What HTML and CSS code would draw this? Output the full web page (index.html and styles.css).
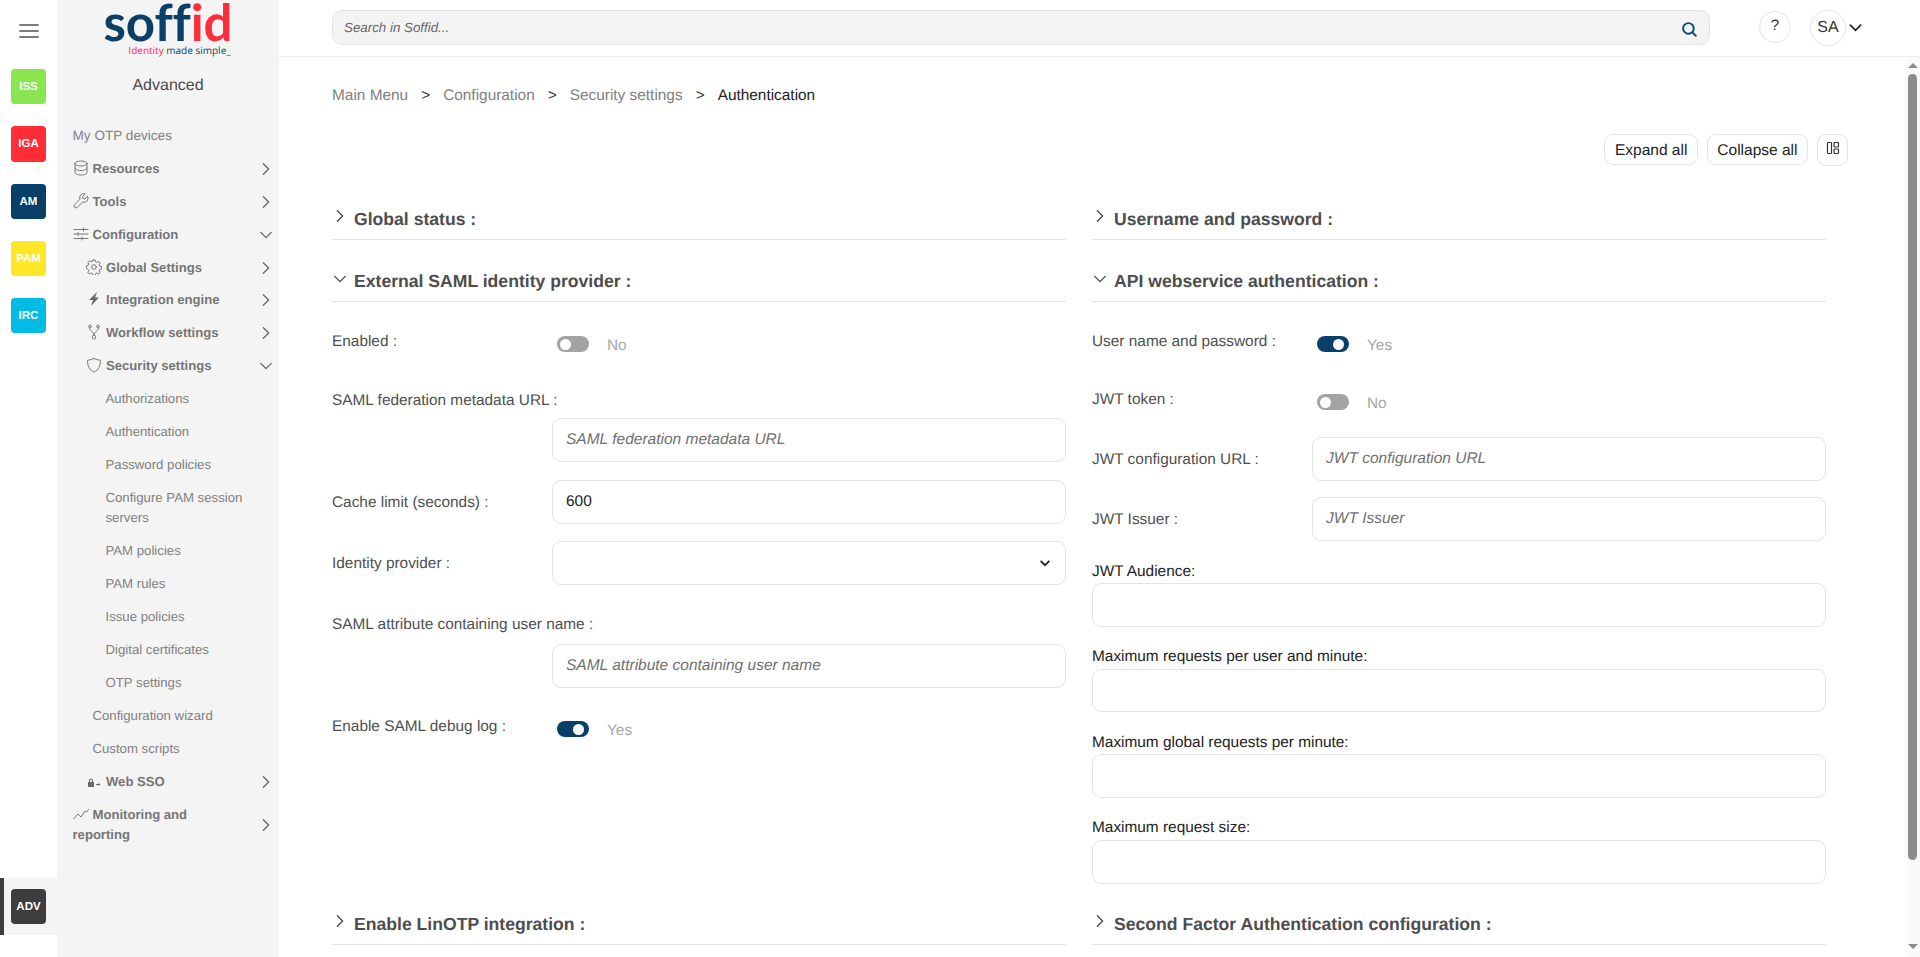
FILE: index.html
```html
<!DOCTYPE html>
<html lang="en">
<head>
<meta charset="utf-8">
<title>Soffid - Authentication</title>
<link rel="stylesheet" href="styles.css">
</head>
<body>
<svg class="defs" width="0" height="0" aria-hidden="true">
  <symbol id="chev-r" viewBox="0 0 16 16"><path d="M5 2l6 6-6 6" fill="none" stroke="currentColor" stroke-width="1.500" stroke-linecap="round" stroke-linejoin="round"/></symbol>
  <symbol id="chev-d" viewBox="0 0 16 16"><path d="M2 5l6 6 6-6" fill="none" stroke="currentColor" stroke-width="1.500" stroke-linecap="round" stroke-linejoin="round"/></symbol>
</svg>

<nav class="apps">
  <button class="burger" aria-label="Menu"><span></span><span></span><span></span></button>
  <a class="app app-iss">ISS</a>
  <a class="app app-iga">IGA</a>
  <a class="app app-am">AM</a>
  <a class="app app-pam">PAM</a>
  <a class="app app-irc">IRC</a>
  <div class="app-current"><a class="app app-adv">ADV</a></div>
</nav>

<aside class="panel">
  <div class="logo">
    <div class="logo-word"><span class="navy">soff</span><span class="red">id</span></div>
    <div class="logo-tag"><span class="red">Identity</span> <span class="navy">made simple_</span></div>
  </div>
  <div class="panel-title">Advanced</div>
  <ul class="menu">
    <li class="item plain l0 first">My OTP devices</li>
    <li class="item bold l0"><span class="txt"><svg class="ic" viewBox="0 0 16 16"><ellipse cx="8" cy="3.500" rx="6" ry="2.500"/><path d="M2 3.500v9c0 1.400 2.700 2.500 6 2.500s6-1.100 6-2.500v-9M2 8c0 1.400 2.700 2.500 6 2.500s6-1.100 6-2.500"/></svg>Resources</span><svg class="chev"><use href="#chev-r"/></svg></li>
    <li class="item bold l0"><span class="txt"><svg class="ic" viewBox="0 0 16 16"><path d="M14.600 3.300l-2.700 2.700-1.900-.5-.5-1.900 2.700-2.700A4 4 0 0 0 7 6.200L1.600 11.600a1.900 1.900 0 0 0 2.700 2.700L9.700 9a4 4 0 0 0 4.900-5.700z"/></svg>Tools</span><svg class="chev"><use href="#chev-r"/></svg></li>
    <li class="item bold l0"><span class="txt"><svg class="ic" viewBox="0 0 16 16"><path d="M1 3.500h14M1 8h14M1 12.500h14M10.500 2v3M5 6.500v3M9 11v3"/></svg>Configuration</span><svg class="chev"><use href="#chev-d"/></svg></li>
    <li class="item bold l1 tight"><span class="txt"><svg class="ic" viewBox="0 0 16 16"><circle cx="8" cy="8" r="2.300"/><path d="M6.800 1h2.400l.4 1.900 1.300.6 1.700-1 1.600 1.700-1 1.600.6 1.400 1.900.4v2.400l-1.900.4-.6 1.300 1 1.700-1.700 1.600-1.600-1-1.400.6-.4 1.900H6.800l-.4-1.900-1.300-.6-1.700 1-1.600-1.700 1-1.600-.6-1.400L.3 9.200V6.800l1.900-.4.6-1.300-1-1.700 1.700-1.600 1.600 1 1.400-.6z"/></svg>Global Settings</span><svg class="chev"><use href="#chev-r"/></svg></li>
    <li class="item bold l1"><span class="txt"><svg class="ic ic-fill" viewBox="0 0 16 16"><path d="M11 1L3 9h4l-2 6 8-8.500H9z"/></svg>Integration engine</span><svg class="chev"><use href="#chev-r"/></svg></li>
    <li class="item bold l1"><span class="txt"><svg class="ic" viewBox="0 0 16 16"><circle cx="4" cy="2.500" r="1.400"/><circle cx="12" cy="2.500" r="1.400"/><rect x="6.500" y="11.500" width="3" height="3.500" rx=".8"/><path d="M3.500 4c0 3.500 4.500 3 4.500 7.500M12.500 4c0 3.500-4.500 3-4.500 7.500"/></svg>Workflow settings</span><svg class="chev"><use href="#chev-r"/></svg></li>
    <li class="item bold l1"><span class="txt"><svg class="ic" viewBox="0 0 16 16"><path d="M8 1.500c2 1 4.500 1.500 6.500 1.700 0 5.800-2 9.800-6.500 11.800C3.500 13 1.500 9 1.500 3.200 3.500 3 6 2.500 8 1.500z"/></svg>Security settings</span><svg class="chev"><use href="#chev-d"/></svg></li>
    <li class="item plain l2">Authorizations</li>
    <li class="item plain l2">Authentication</li>
    <li class="item plain l2">Password policies</li>
    <li class="item plain l2">Configure PAM session servers</li>
    <li class="item plain l2">PAM policies</li>
    <li class="item plain l2">PAM rules</li>
    <li class="item plain l2">Issue policies</li>
    <li class="item plain l2">Digital certificates</li>
    <li class="item plain l2">OTP settings</li>
    <li class="item plain l1b">Configuration wizard</li>
    <li class="item plain l1b">Custom scripts</li>
    <li class="item bold l1"><span class="txt"><svg class="ic ic-fill" viewBox="0 0 16 16"><path d="M3 9V7.500a2 2 0 0 1 4 0V9h1v5H2V9zm1 0h2V7.500a1 1 0 0 0-2 0zM10 11h2.500v-1l2 1.500-2 1.500v-1H10z"/></svg>Web SSO</span><svg class="chev"><use href="#chev-r"/></svg></li>
    <li class="item bold l0 wrap"><span class="txt"><svg class="ic" viewBox="0 0 16 16"><path d="M.5 13l4.500-5 3 3 4-6 1.500 1 2-2.500"/></svg>Monitoring and reporting</span><svg class="chev"><use href="#chev-r"/></svg></li>
  </ul>
</aside>

<div class="page">
  <header class="topbar">
    <div class="search">
      <input class="search-input" type="text" placeholder="Search in Soffid...">
      <svg class="search-ic" viewBox="0 0 16 16"><circle cx="7" cy="7" r="5"/><path d="M10.800 10.800L14.500 14.500"/></svg>
    </div>
    <button class="help">?</button>
    <button class="avatar">SA</button>
    <svg class="avatar-chev" viewBox="0 0 16 16"><path d="M2 5l6 6 6-6"/></svg>
  </header>

  <div class="body-row">
    <main class="content">
      <ol class="crumbs">
        <li>Main Menu</li><li class="sep">&gt;</li>
        <li>Configuration</li><li class="sep">&gt;</li>
        <li>Security settings</li><li class="sep">&gt;</li>
        <li class="cur">Authentication</li>
      </ol>
      <div class="actions">
        <button class="btn">Expand all</button>
        <button class="btn">Collapse all</button>
        <button class="btn btn-ic" aria-label="Layout"><svg viewBox="0 0 14 14"><rect x="1.500" y="1.500" width="4" height="11" rx=".8"/><rect x="8" y="1.500" width="4.500" height="4.500" rx=".8"/><rect x="8" y="8" width="4.500" height="4.500" rx=".8"/></svg></button>
      </div>

      <div class="sections">
        <section class="sec closed">
          <h2 class="sec-head"><svg class="sec-chev"><use href="#chev-r"/></svg>Global status :</h2>
        </section>
        <section class="sec closed">
          <h2 class="sec-head"><svg class="sec-chev"><use href="#chev-r"/></svg>Username and password :</h2>
        </section>

        <section class="sec open">
          <h2 class="sec-head"><svg class="sec-chev"><use href="#chev-d"/></svg>External SAML identity provider :</h2>
          <div class="sec-body">
            <div class="row-toggle gap-30">
              <label class="lab">Enabled :</label>
              <span class="switch"><span class="tog off"></span><span class="tog-txt">No</span></span>
            </div>
            <div class="row-stacked gap-18">
              <label class="lab">SAML federation metadata URL :</label>
              <input class="inp indent" type="text" placeholder="SAML federation metadata URL">
            </div>
            <div class="row-inline gap-17">
              <label class="lab">Cache limit (seconds) :</label>
              <input class="inp" type="text" value="600">
            </div>
            <div class="row-inline gap-29">
              <label class="lab">Identity provider :</label>
              <div class="select"><select class="inp sel"><option></option></select><svg class="sel-chev" viewBox="0 0 16 16"><path d="M3 5.500l5 5 5-5"/></svg></div>
            </div>
            <div class="row-stacked gap-19 wide-gap">
              <label class="lab">SAML attribute containing user name :</label>
              <input class="inp indent" type="text" placeholder="SAML attribute containing user name">
            </div>
            <div class="row-toggle">
              <label class="lab">Enable SAML debug log :</label>
              <span class="switch"><span class="tog on"></span><span class="tog-txt">Yes</span></span>
            </div>
          </div>
        </section>

        <section class="sec open">
          <h2 class="sec-head"><svg class="sec-chev"><use href="#chev-d"/></svg>API webservice authentication :</h2>
          <div class="sec-body">
            <div class="row-toggle gap-20">
              <label class="lab">User name and password :</label>
              <span class="switch"><span class="tog on"></span><span class="tog-txt">Yes</span></span>
            </div>
            <div class="row-toggle gap-19">
              <label class="lab">JWT token :</label>
              <span class="switch"><span class="tog off"></span><span class="tog-txt">No</span></span>
            </div>
            <div class="row-inline gap-16">
              <label class="lab">JWT configuration URL :</label>
              <input class="inp" type="text" placeholder="JWT configuration URL">
            </div>
            <div class="row-inline gap-20">
              <label class="lab">JWT Issuer :</label>
              <input class="inp" type="text" placeholder="JWT Issuer">
            </div>
            <div class="field"><label class="field-lab">JWT Audience:</label><input class="inp" type="text"></div>
            <div class="field"><label class="field-lab">Maximum requests per user and minute:</label><input class="inp" type="text"></div>
            <div class="field"><label class="field-lab">Maximum global requests per minute:</label><input class="inp" type="text"></div>
            <div class="field"><label class="field-lab">Maximum request size:</label><input class="inp" type="text"></div>
          </div>
        </section>

        <section class="sec closed">
          <h2 class="sec-head"><svg class="sec-chev"><use href="#chev-r"/></svg>Enable LinOTP integration :</h2>
        </section>
        <section class="sec closed">
          <h2 class="sec-head"><svg class="sec-chev"><use href="#chev-r"/></svg>Second Factor Authentication configuration :</h2>
        </section>
      </div>
    </main>

    <div class="scrollbar">
      <span class="arrow-up"></span>
      <span class="thumb"></span>
      <span class="arrow-down"></span>
    </div>
  </div>
</div>
</body>
</html>
```

FILE: styles.css
```css
* { box-sizing: border-box; }
html, body { height: 100%; }
body {
  margin: 0;
  display: flex;
  height: 957px;
  overflow: hidden;
  background: #fff;
  font-family: "Liberation Sans", Arial, sans-serif;
  color: #333;
  text-rendering: geometricPrecision;
}
input, select, button { text-rendering: geometricPrecision; }
.defs { position: absolute; }

/* app strip */
.apps {
  width: 57px;
  flex: none;
  display: flex;
  flex-direction: column;
  background: #fff;
}
.burger {
  width: 20px;
  height: 14px;
  margin: 24px 0 31px 19px;
  padding: 0;
  border: 0;
  background: none;
  display: flex;
  flex-direction: column;
  justify-content: space-between;
}
.burger span { display: block; height: 2px; background: #7c7c7c; border-radius: 1px; }
.app {
  width: 35px;
  height: 35px;
  margin: 0 0 22px 11px;
  border-radius: 4px;
  display: flex;
  align-items: center;
  justify-content: center;
  color: #fff;
  font-size: 11.500px;
  font-weight: 700;
  flex: none;
}
.app-iss { background: #8ae650; }
.app-iga { background: #ff2d35; height: 36px; }
.app-am { background: #073f68; }
.app-pam { background: #fee726; }
.app-irc { background: #00bce4; }
.app-adv { background: #3d3d3d; margin: 0 0 0 7px; }
.app-current {
  margin-top: auto;
  margin-bottom: 22px;
  height: 57px;
  background: #f4f4f4;
  border-left: 4px solid #3d3d3d;
  display: flex;
  align-items: center;
}

/* panel */
.panel {
  width: 222px;
  flex: none;
  background: #f4f4f4;
}
.logo { height: 60px; text-align: center; }
.logo-word {
  font-family: Lato, sans-serif;
  font-weight: 700;
  font-size: 51px;
  line-height: 44px;
  letter-spacing: -.100px;
  font-variant-ligatures: none;
  height: 44px;
}
.logo-tag {
  font-family: "Open Sans", sans-serif;
  font-size: 10px;
  line-height: 12px;
  padding-left: 23px;
  white-space: nowrap;
}
.navy { color: #0a3f68; }
.red { color: #ff2d3a; }
.panel-title {
  text-align: center;
  font-size: 16px;
  line-height: 20px;
  color: #4a4a4a;
  margin-top: 16px;
}
.menu { list-style: none; margin: 23px 0 0; padding: 0; }
.item {
  display: flex;
  align-items: center;
  min-height: 33px;
  padding: 6.500px 6px 6.500px 15px;
  font-size: 13.200px;
  line-height: 20px;
  color: #808080;
}
.item.first { font-size: 13.600px; }
.item.bold { font-weight: 700; font-size: 13.100px; color: #757575; }
.item.tight { min-height: 32px; padding-top: 6.500px; padding-bottom: 5.500px; }
.txt { flex: 1; min-width: 0; }
.l0 { padding-left: 15.500px; }
.l1 { padding-left: 29px; }
.l1b { padding-left: 35.500px; }
.l2 { padding-left: 48.500px; padding-right: 30px; }
.wrap .txt { padding-right: 40px; }
.ic {
  width: 16px;
  height: 16px;
  margin-right: 4px;
  vertical-align: -3px;
  fill: none;
  stroke: #777;
  stroke-width: 1;
  stroke-linecap: round;
  stroke-linejoin: round;
}
.ic-fill { fill: #6a6a6a; stroke: none; }
.chev { width: 14px; height: 14px; color: #666; flex: none; }

/* page */
.page { flex: 1; min-width: 0; display: flex; flex-direction: column; }
.topbar {
  height: 57px;
  flex: none;
  border-bottom: 1px solid #eee;
  display: flex;
  align-items: flex-start;
  padding: 10px 0 0 53px;
}
.search { position: relative; width: 1378px; height: 35px; margin-right: 49px; }
.search-input {
  width: 100%;
  height: 100%;
  background: #f3f3f3;
  border: 1px solid #e3e3e3;
  border-radius: 10px;
  padding: 0 11px;
  font: italic 13.330px "Liberation Sans", sans-serif;
  outline: none;
}
.search-input::placeholder { color: #666; opacity: 1; }
.search-ic {
  position: absolute;
  right: 12px;
  top: 10.500px;
  width: 17px;
  height: 17px;
  fill: none;
  stroke: #0a4a75;
  stroke-width: 1.800;
}
.help, .avatar {
  padding: 0;
  border: 1px solid #e3e3e3;
  border-radius: 50%;
  background: #fff;
  color: #333;
  font-family: "Liberation Sans", sans-serif;
}
.help { width: 32px; height: 32px; margin-top: 1px; margin-right: 19px; font-size: 15px; padding-bottom: 4px; }
.avatar { width: 36px; height: 36px; font-size: 16px; margin-right: 2px; }
.avatar-chev { width: 15px; height: 15px; margin-top: 9.500px; fill: none; stroke: #222; stroke-width: 1.800; }

.body-row { flex: 1; min-height: 0; display: flex; }
.content { flex: 1; min-width: 0; overflow: hidden; padding: 0 57px 0 53px; }

.crumbs {
  list-style: none;
  margin: 29px 0 28px;
  padding: 0;
  display: flex;
  gap: 13px;
  font-size: 15.400px;
  line-height: 20px;
  color: #808080;
}
.crumbs .sep { color: #333; }
.crumbs .cur { color: #222; }

.actions { display: flex; justify-content: flex-end; gap: 9px; margin-bottom: 30px; }
.btn {
  height: 31px;
  padding: 2px 9.500px 0;
  background: #fff;
  border: 1px solid #e3e3e3;
  border-radius: 9px;
  font: 15.500px "Liberation Sans", sans-serif;
  color: #222;
}
.btn-ic { width: 31px; height: 32px; padding: 0; display: flex; align-items: center; justify-content: center; }
.btn-ic svg { width: 14px; height: 14px; margin-top: -5px; fill: none; stroke: #333; stroke-width: 1.200; }

.sections {
  display: grid;
  grid-template-columns: 734px 734px;
  column-gap: 26px;
  align-items: start;
}
.sec.closed { margin-bottom: 18px; }
.sec.open { margin-bottom: 17px; }
.sec-head {
  position: relative;
  margin: 0;
  padding: 13px 0 10px 22px;
  font-size: 17.600px;
  line-height: 20px;
  font-weight: 700;
  color: #4d4d4d;
  border-bottom: 1px solid #e2e2e2;
}
.sec-chev {
  position: absolute;
  left: 1px;
  top: 13px;
  width: 14px;
  height: 14px;
  color: #444;
}
.open .sec-chev { top: 14px; }
.sec-body { padding-top: 20px; }
.lab { font-size: 15.400px; line-height: 20px; color: #4f4f4f; }

.row-toggle { display: grid; grid-template-columns: 225px 1fr; height: 38px; align-items: start; padding-top: 10px; }
.switch { display: flex; align-items: center; margin-top: 1px; height: 22px; }
.tog {
  position: relative;
  width: 32px;
  height: 16px;
  border-radius: 8px;
  flex: none;
  margin-right: 18px;
}
.tog::after {
  content: "";
  position: absolute;
  top: 2.500px;
  width: 11px;
  height: 11px;
  border-radius: 50%;
  background: #fff;
}
.tog.off { background: #a3a3a3; }
.tog.off::after { left: 3px; }
.tog.on { background: #073f68; }
.tog.on::after { right: 5px; }
.tog-txt { font-size: 15.400px; color: #a6a6a6; padding-top: 3px; }

.row-inline { display: grid; grid-template-columns: 220px 1fr; align-items: center; }
.row-inline .lab { padding-top: 2px; }
.row-stacked { display: flex; flex-direction: column; }
.row-stacked .lab { padding-top: 1px; margin-bottom: 7px; }
.row-stacked.wide-gap .lab { margin-bottom: 9px; }
.indent { margin-left: 220px; width: calc(100% - 220px) !important; }

.gap-16 { margin-bottom: 16px; }
.gap-17 { margin-bottom: 17px; }
.gap-18 { margin-bottom: 18px; }
.gap-19 { margin-bottom: 19px; }
.gap-20 { margin-bottom: 20px; }
.gap-29 { margin-bottom: 29px; }
.gap-30 { margin-bottom: 30px; }

.inp {
  display: block;
  width: 100%;
  height: 44px;
  padding: 0 13px;
  background: #fff;
  border: 1px solid #e3e3e3;
  border-radius: 9px;
  font: 15.500px "Liberation Sans", sans-serif;
  color: #222;
  outline: none;
}
.inp::placeholder { font-style: italic; color: #707070; opacity: 1; }
.select { position: relative; }
.sel { appearance: none; }
.sel-chev {
  position: absolute;
  right: 14px;
  top: 15px;
  width: 14px;
  height: 14px;
  fill: none;
  stroke: #222;
  stroke-width: 2;
}
.field { margin-bottom: 20px; }
.field:last-child { margin-bottom: 0; }
.field .inp { height: 43.670px; }
.field-lab { display: block; padding-top: .5px; font-size: 15.400px; line-height: 20px; color: #222; margin-bottom: 1.500px; }

/* scrollbar */
.scrollbar {
  width: 15px;
  flex: none;
  background: #fafafa;
  display: flex;
  flex-direction: column;
  align-items: center;
  padding-top: 6px;
}
.arrow-up, .arrow-down { width: 0; height: 0; border-left: 5px solid transparent; border-right: 5px solid transparent; }
.arrow-up { border-bottom: 5px solid #8c8c8c; margin-bottom: 6px; }
.arrow-down { border-top: 5px solid #8c8c8c; margin-top: 84px; }
.thumb { width: 9px; height: 786px; background: #8c8c8c; border-radius: 4.500px; flex: none; }
```
